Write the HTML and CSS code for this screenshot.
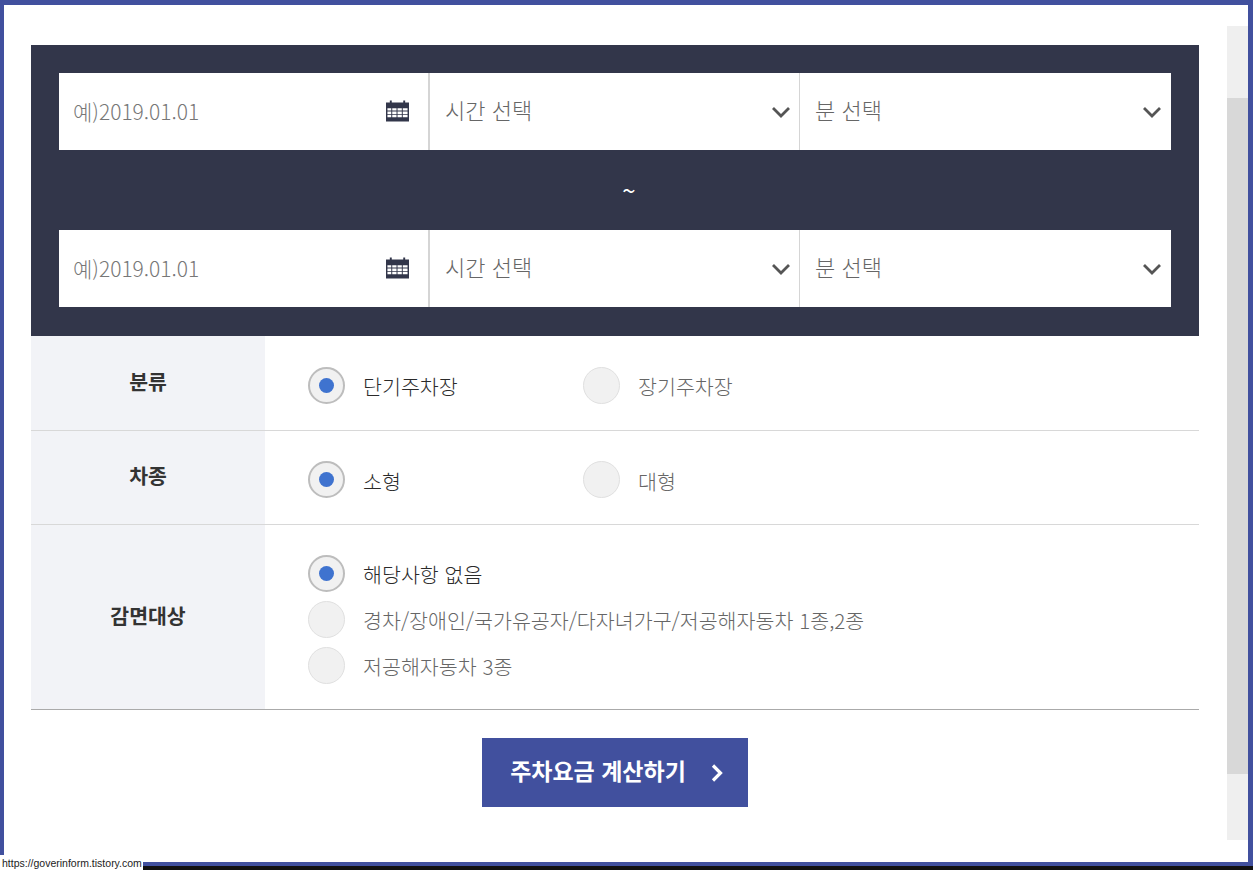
FILE: index.html
```html
<!DOCTYPE html>
<html lang="ko">
<head>
<meta charset="utf-8">
<title>주차요금 계산</title>
<link rel="stylesheet" href="styles.css">
</head>
<body>
<div class="frame">
  <main class="main">
    <section class="panel">
      <div class="picker">
        <div class="cell date"><span class="ph">예)2019.01.01</span>
          <svg class="cal" width="23" height="22" viewBox="0 0 24 22"><path fill="#32364a" d="M0 2h4V0h2v2h12V0h2v2h4v20H0z"/><path fill="#fff" d="M1.500 8h4v2.500h-4zM6.500 8H11v2.500H6.500zM12 8h4.500v2.500H12zM17.500 8h5v2.500h-5zM1.500 11.500h4V14h-4zM6.500 11.500H11V14H6.500zM12 11.500h4.500V14H12zM17.500 11.500h5V14h-5zM1.500 15h4v2.500h-4zM6.500 15H11v2.500H6.500zM12 15h4.500v2.500H12zM17.500 15h5v2.500h-5z"/></svg>
        </div>
        <div class="cell select"><span class="sel">시간 선택</span>
          <svg class="chev" width="20" height="12" viewBox="0 0 20 12"><path d="M2 2 10 10 18 2" fill="none" stroke="#555" stroke-width="2.800"/></svg>
        </div>
        <div class="cell select"><span class="sel">분 선택</span>
          <svg class="chev" width="20" height="12" viewBox="0 0 20 12"><path d="M2 2 10 10 18 2" fill="none" stroke="#555" stroke-width="2.800"/></svg>
        </div>
      </div>
      <div class="tilde">~</div>
      <div class="picker">
        <div class="cell date"><span class="ph">예)2019.01.01</span>
          <svg class="cal" width="23" height="22" viewBox="0 0 24 22"><path fill="#32364a" d="M0 2h4V0h2v2h12V0h2v2h4v20H0z"/><path fill="#fff" d="M1.500 8h4v2.500h-4zM6.500 8H11v2.500H6.500zM12 8h4.500v2.500H12zM17.500 8h5v2.500h-5zM1.500 11.500h4V14h-4zM6.500 11.500H11V14H6.500zM12 11.500h4.500V14H12zM17.500 11.500h5V14h-5zM1.500 15h4v2.500h-4zM6.500 15H11v2.500H6.500zM12 15h4.500v2.500H12zM17.500 15h5v2.500h-5z"/></svg>
        </div>
        <div class="cell select"><span class="sel">시간 선택</span>
          <svg class="chev" width="20" height="12" viewBox="0 0 20 12"><path d="M2 2 10 10 18 2" fill="none" stroke="#555" stroke-width="2.800"/></svg>
        </div>
        <div class="cell select"><span class="sel">분 선택</span>
          <svg class="chev" width="20" height="12" viewBox="0 0 20 12"><path d="M2 2 10 10 18 2" fill="none" stroke="#555" stroke-width="2.800"/></svg>
        </div>
      </div>
    </section>

    <section class="form">
      <div class="row row-a">
        <div class="head">분류</div>
        <div class="body inline">
          <label class="opt wide on"><i class="radio"></i><span>단기주차장</span></label>
          <label class="opt"><i class="radio"></i><span>장기주차장</span></label>
        </div>
      </div>
      <div class="row row-b">
        <div class="head">차종</div>
        <div class="body inline">
          <label class="opt wide on"><i class="radio"></i><span>소형</span></label>
          <label class="opt"><i class="radio"></i><span>대형</span></label>
        </div>
      </div>
      <div class="row row-c">
        <div class="head">감면대상</div>
        <div class="body stack">
          <label class="opt on"><i class="radio"></i><span>해당사항 없음</span></label>
          <label class="opt"><i class="radio"></i><span>경차/장애인/국가유공자/다자녀가구/저공해자동차 1종,2종</span></label>
          <label class="opt"><i class="radio"></i><span>저공해자동차 3종</span></label>
        </div>
      </div>
    </section>

    <div class="actions">
      <button class="calc" type="button"><span>주차요금 계산하기</span>
        <svg width="14" height="20" viewBox="0 0 14 20"><path d="M3 2.500 10.500 10 3 17.500" fill="none" stroke="#fff" stroke-width="3.200"/></svg>
      </button>
    </div>
  </main>
  <div class="scrollbar"><div class="thumb"></div></div>
</div>
<div class="under"></div>
<div class="status">https://goverinform.tistory.com</div>
</body>
</html>
```

FILE: styles.css
```css
* { box-sizing: border-box; }
html, body { margin: 0; padding: 0; height: 870px; overflow: hidden; background: #fff; }
body {
  font-family: "Noto Sans CJK KR", "Noto Sans", sans-serif;
  color: #333;
}
.frame {
  display: flex;
  height: 866px;
  border-style: solid;
  border-color: #41509e;
  border-width: 5px 5px 4px 4px;
  background: #fff;
}
.under { height: 4px; background: #111; }
.main { width: 1223px; padding: 40px 28px 0 27px; flex: none; }
.panel { background: #32364a; padding: 28px 28px 29px; height: 291px; }
.picker { display: flex; height: 77px; background: #fff; }
.cell {
  display: flex;
  align-items: center;
  justify-content: space-between;
  height: 77px;
  border-right: 2px solid #d5d5d5;
}
.cell:nth-child(1) { width: 371px; padding: 0 19px 2px 14px; }
.cell:nth-child(2) { width: 370px; padding: 0 8px 2px 15px; border-right-width: 1px; }
.cell:nth-child(3) { flex: 1; padding: 0 9px 2px 15px; border-right: 0; }
.ph { font-size: 21px; font-weight: 300; color: #777; }
.sel { font-size: 22px; font-weight: 300; color: #666; margin-top: -4px; }
.cal { flex: none; }
.chev { flex: none; margin-top: 2px; }
.tilde { height: 80px; line-height: 80px; padding-left: 28px; text-align: center; color: #fff; font-size: 24px; }
.row { display: flex; border-bottom: 1px solid #d8d8d8; }
.row-a { height: 95px; }
.row-b { height: 94px; }
.row-c { height: 185px; border-bottom-color: #aaa; }
.head {
  width: 234px;
  flex: none;
  display: flex;
  align-items: center;
  justify-content: center;
  padding-bottom: 4px;
  background: #f2f3f7;
  font-size: 20.500px;
  font-weight: 700;
}
.row-b .head { padding-bottom: 6px; }
.body { flex: 1; padding-left: 43px; }
.inline { display: flex; align-items: center; padding-top: 4px; }
.stack { display: flex; flex-direction: column; justify-content: center; gap: 9px; padding-top: 4px; }
.opt {
  display: flex;
  align-items: center;
  gap: 18px;
  font-size: 20.600px;
  font-weight: 300;
  color: #666;
}
.opt span { padding-top: 2px; }
.opt.on { color: #2a2a2a; }
.wide { width: 275px; }
.radio {
  width: 37px;
  height: 37px;
  flex: none;
  border-radius: 50%;
  background: #f1f1f1;
  border: 1px solid #e0e0e0;
  display: flex;
  align-items: center;
  justify-content: center;
}
.on .radio { border: 2px solid #bdbdbd; }
.on .radio::after {
  content: "";
  width: 15px;
  height: 15px;
  border-radius: 50%;
  background: #3f73cf;
}
.actions { display: flex; justify-content: center; padding-top: 28px; }
.calc {
  width: 266px;
  height: 69px;
  border: 0;
  padding: 0 0 5px 4px;
  background: #41509e;
  color: #fff;
  font: 700 23px "Noto Sans CJK KR", sans-serif;
  display: flex;
  align-items: center;
  justify-content: center;
  gap: 24px;
}
.calc svg { margin-top: 5px; }
.scrollbar { width: 21px; height: 814px; margin-top: 21px; padding-top: 72px; background: #efefef; flex: none; }
.thumb { height: 676px; background: #d8d8d8; }
.status {
  position: absolute;
  left: 0;
  top: 855px;
  width: 143px;
  height: 15px;
  background: #fff;
  color: #222;
  font: 10.500px/16px "Liberation Sans", sans-serif;
  padding-left: 2px;
  white-space: nowrap;
}
```
